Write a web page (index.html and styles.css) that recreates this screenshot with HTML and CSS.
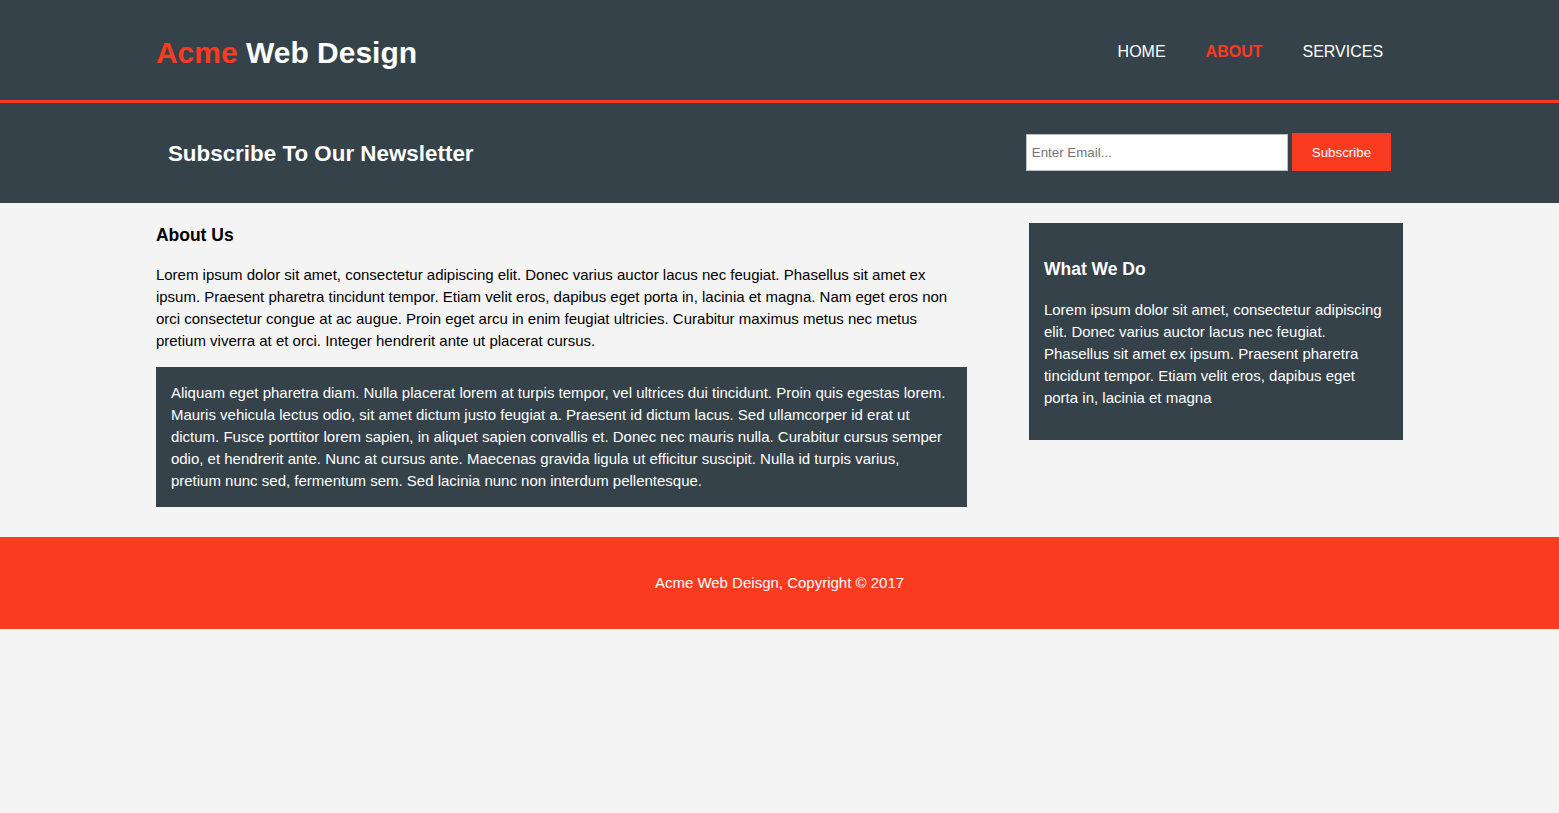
FILE: index.html
```html
<!DOCTYPE html>
<html lang="en">
<head>
<meta charset="utf-8">
<title>Acme Web Design | About</title>
<link rel="stylesheet" href="styles.css">
</head>
<body>
<header class="site-header">
  <div class="container header-inner">
    <h1 class="branding"><span class="highlight">Acme</span> Web Design</h1>
    <nav class="nav">
      <ul class="nav-list">
        <li class="nav-item"><a href="#">Home</a></li>
        <li class="nav-item current"><a href="#">About</a></li>
        <li class="nav-item"><a href="#">Services</a></li>
      </ul>
    </nav>
  </div>
</header>

<section class="newsletter">
  <div class="container newsletter-inner">
    <h1 class="newsletter-title">Subscribe To Our Newsletter</h1>
    <form class="newsletter-form">
      <input class="email-input" type="email" placeholder="Enter Email...">
      <button class="button-1" type="submit">Subscribe</button>
    </form>
  </div>
</section>

<section class="content">
  <div class="container content-inner">
    <article class="main-col">
      <h1 class="page-title">About Us</h1>
      <p class="text">Lorem ipsum dolor sit amet, consectetur adipiscing elit. Donec varius auctor lacus nec feugiat. Phasellus sit amet ex ipsum. Praesent pharetra tincidunt tempor. Etiam velit eros, dapibus eget porta in, lacinia et magna. Nam eget eros non orci consectetur congue at ac augue. Proin eget arcu in enim feugiat ultricies. Curabitur maximus metus nec metus pretium viverra at et orci. Integer hendrerit ante ut placerat cursus.</p>
      <p class="dark-box">Aliquam eget pharetra diam. Nulla placerat lorem at turpis tempor, vel ultrices dui tincidunt. Proin quis egestas lorem. Mauris vehicula lectus odio, sit amet dictum justo feugiat a. Praesent id dictum lacus. Sed ullamcorper id erat ut dictum. Fusce porttitor lorem sapien, in aliquet sapien convallis et. Donec nec mauris nulla. Curabitur cursus semper odio, et hendrerit ante. Nunc at cursus ante. Maecenas gravida ligula ut efficitur suscipit. Nulla id turpis varius, pretium nunc sed, fermentum sem. Sed lacinia nunc non interdum pellentesque.</p>
    </article>
    <aside class="sidebar">
      <div class="sidebar-box">
        <h3 class="sidebar-title">What We Do</h3>
        <p class="sidebar-text">Lorem ipsum dolor sit amet, consectetur adipiscing elit. Donec varius auctor lacus nec feugiat. Phasellus sit amet ex ipsum. Praesent pharetra tincidunt tempor. Etiam velit eros, dapibus eget porta in, lacinia et magna</p>
      </div>
    </aside>
  </div>
</section>

<footer class="site-footer">
  <p class="footer-text">Acme Web Deisgn, Copyright &copy; 2017</p>
</footer>
</body>
</html>
```

FILE: styles.css
```css
body {
  margin: 0;
  padding: 0;
  background: #f4f4f4;
  font: 15px/22px "Liberation Sans", Arial, Helvetica, sans-serif;
  color: #000;
}

.container {
  width: 80%;
  margin: 0 auto;
}

/* Header */
.site-header {
  background: #35424a;
  color: #fff;
  padding-top: 30px;
  height: 70px;
  border-bottom: 3px solid #fb3b1f;
}

.header-inner {
  display: flex;
  justify-content: space-between;
  align-items: flex-start;
}

.branding {
  margin: 0;
  font-size: 30px;
  line-height: 45px;
  font-weight: bold;
}

.highlight {
  color: #fb3b1f;
}

.nav {
  margin-top: 10px;
}

.nav-list {
  list-style: none;
  margin: 0;
  padding: 0;
  display: flex;
}

.nav-item {
  padding: 0 20px;
  line-height: 24px;
}

.nav-item a {
  color: #fff;
  text-decoration: none;
  text-transform: uppercase;
  font-size: 16px;
}

.nav-item.current a {
  color: #fb3b1f;
  font-weight: bold;
}

/* Newsletter */
.newsletter {
  background: #35424a;
  color: #fff;
  padding: 15px;
}

.newsletter-inner {
  height: 70px;
  display: flex;
  justify-content: space-between;
  align-items: center;
}

.newsletter-title {
  margin: 0;
  padding-top: 2px;
  font-size: 22.4px;
  line-height: 30px;
  font-weight: bold;
}

.newsletter-form {
  display: flex;
  align-items: center;
  gap: 4px;
  padding-bottom: 2px;
}

.email-input {
  width: 250px;
  height: 25px;
  padding: 4px;
  border: 2px solid #fff;
  outline: 1px solid #b9bfc4;
  outline-offset: -1px;
  background: #fff;
  font: 13.33px "Liberation Sans", Arial, sans-serif;
  color: #333;
  margin: 0;
}

.email-input::placeholder {
  color: #757575;
}

.button-1 {
  height: 38px;
  padding: 0 20px;
  background: #fb3b1f;
  border: 0;
  color: #fff;
  font: 13.33px "Liberation Sans", Arial, sans-serif;
}

/* Content */
.content-inner {
  display: flex;
  justify-content: space-between;
  align-items: flex-start;
}

.main-col {
  width: 65%;
}

.page-title {
  margin: 19px 0 16px;
  font-size: 17.5px;
  line-height: 26px;
  font-weight: bold;
}

.text {
  margin: 0 0 15px;
}

.dark-box {
  margin: 0;
  padding: 15px;
  background: #35424a;
  color: #fff;
}

.sidebar {
  width: 30%;
  margin-top: 20px;
}

.sidebar-box {
  background: #35424a;
  color: #fff;
  padding: 15px;
}

.sidebar-title {
  margin: 18px 0 17px;
  font-size: 17.5px;
  line-height: 26px;
  font-weight: bold;
}

.sidebar-text {
  margin: 0 0 16px;
}

/* Footer */
.site-footer {
  margin-top: 30px;
  padding: 20px;
  background: #fb3b1f;
  color: #fff;
  text-align: center;
}

.footer-text {
  margin: 15px 0;
}
```
